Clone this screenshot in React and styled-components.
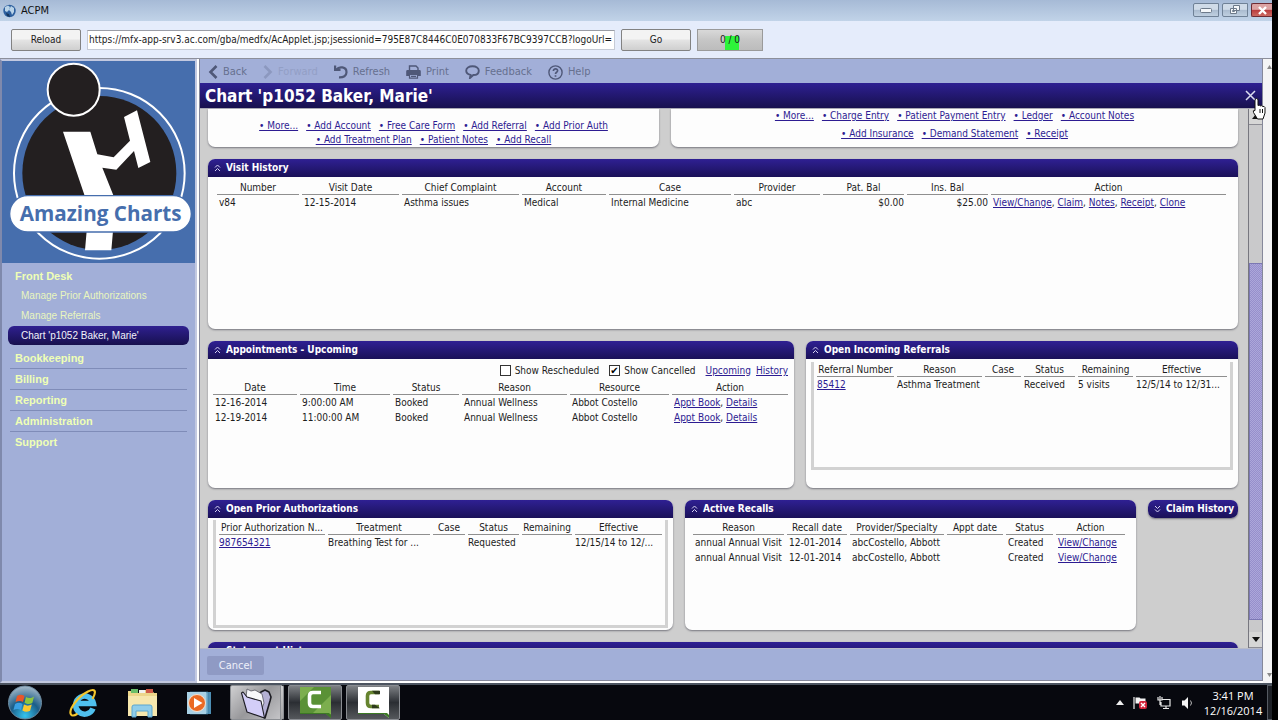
import React from "react";
import styled, { createGlobalStyle, css } from "styled-components";

const UI = `"DejaVu Sans Condensed", "Noto Sans", sans-serif`;

const GlobalStyle = createGlobalStyle`
  * { box-sizing: border-box; }
  body { margin: 0; background: #000; font: 10px/15px ${UI}; color: #1c1c1c; }
  button, input { font: inherit; color: inherit; }
  a { color: #2d1c92; }
`;

const Desktop = styled.div`
  position: relative;
  display: flex;
  flex-direction: column;
  height: 100vh;
  padding-right: 6px;
  overflow: hidden;
`;

/* ---------- window frame ---------- */
const TitleBar = styled.header`
  display: flex;
  align-items: center;
  gap: 5px;
  height: 21px;
  flex: none;
  padding-left: 3px;
  background: linear-gradient(#a6bad6, #c1d3e8);
  font-size: 11px;
  color: #111;
`;
const WindowButtons = styled.div`
  display: flex;
  gap: 3px;
  margin-left: auto;
  align-self: flex-start;
  padding-top: 3px;
`;
const WindowButton = styled.button`
  display: grid;
  place-items: center;
  width: ${(p) => (p.$close ? 21 : 26)}px;
  height: 14px;
  padding: 0;
  border: 1px solid ${(p) => (p.$close ? "#6d2b33" : "#6f8196")};
  border-right-width: ${(p) => (p.$close ? 0 : 1)}px;
  border-radius: 2px 0 0 2px;
  background: ${(p) =>
    p.$close
      ? "linear-gradient(#dca3a3 45%, #b93b3d 50%, #cc6a62)"
      : "linear-gradient(#cfdbe8 45%, #aabbcf 50%, #bfcfe0)"};
`;
const AddressBar = styled.form`
  display: flex;
  align-items: center;
  gap: 6px;
  height: 38px;
  flex: none;
  padding: 0 11px;
  background: #e5ecfb;
  border-bottom: 1px solid #8c8f9b;
`;
const PushButton = styled.button`
  width: 70px;
  height: 22px;
  padding: 0;
  border: 1px solid #828282;
  border-radius: 2px;
  background: linear-gradient(#f3f3f3 45%, #e4e4e4 50%, #cfcfcf);
`;
const UrlInput = styled.input`
  width: 528px;
  height: 20px;
  padding: 0 1px;
  border: 1px solid #c6cbd6;
  border-top-color: #9a9da6;
  background: #fff;
`;
const Meter = styled.output`
  width: 66px;
  height: 22px;
  border: 1px solid #9a9a9a;
  text-align: center;
  line-height: 20px;
  background: linear-gradient(#2df43a, #2df43a) 27px 6px / 14px 14px no-repeat,
    linear-gradient(#d9d9d9, #c6c6c6 50%, #bcbcbc);
`;

const Workspace = styled.div`
  display: flex;
  flex: 1;
  min-height: 0;
  background: #fff;
`;

/* ---------- sidebar ---------- */
const Sidebar = styled.aside`
  width: 197px;
  flex: none;
  margin-right: 2px;
  border: 2px solid #c3c9e0;
  border-left-color: #7f89ac;
  background: #a2afd8;
`;
const LogoBox = styled.div`
  height: 202px;
  background: #466ead;
  svg { display: block; width: 100%; height: 100%; }
`;
const Nav = styled.nav`
  padding: 3px 6px 0;
  font-family: "Liberation Sans", Arial, sans-serif;
`;
const NavHeading = styled.a`
  display: block;
  height: ${(p) => (p.$first ? 20 : 21)}px;
  margin: 0 2px;
  padding-left: 5px;
  border-bottom: ${(p) => (p.$line ? "1px solid #7f8cb8" : "0")};
  color: #efffb5;
  font-size: 11px;
  line-height: 20px;
  font-weight: bold;
  text-decoration: none;
`;
const NavItem = styled.a`
  display: block;
  height: 20px;
  line-height: 20px;
  padding-left: 13px;
  text-decoration: none;
  color: #e9f6bd;
  ${(p) =>
    p.$active &&
    css`
      height: 19px;
      line-height: 19px;
      margin-bottom: 3px;
      color: #f2f2fa;
      border-radius: 6px;
      background: linear-gradient(#2f2090, #17104f);
    `}
`;

/* ---------- chart window ---------- */
const ChartWindow = styled.main`
  display: flex;
  flex-direction: column;
  flex: 1;
  min-width: 0;
  border: 1px solid #85889a;
  border-top: 0;
  margin-bottom: 2px;
  background: #a2afd8;
`;
const Toolbar = styled.div`
  display: flex;
  align-items: center;
  height: 24px;
  flex: none;
  padding: 2px 0 0 8px;
  gap: 16px;
`;
const ToolButton = styled.button`
  display: flex;
  align-items: center;
  gap: 5px;
  padding: 0;
  border: 0;
  background: none;
  font-size: 11px;
  line-height: 16px;
  color: #66708f;
  opacity: ${(p) => (p.disabled ? 0.25 : 1)};
  svg { display: block; }
`;
const ChartTitle = styled.div`
  display: flex;
  align-items: center;
  justify-content: space-between;
  height: 26px;
  flex: none;
  padding: 0 6px 0 5px;
  border-bottom: 1px solid #a9a9b4;
  background: linear-gradient(#2e2092, #17104e);
  color: #fff;
  h1 { margin: 0; font: bold 17px/24px ${UI}; }
`;
const CloseButton = styled.button`
  padding: 0;
  border: 0;
  background: none;
  line-height: 0;
`;
const Viewport = styled.div`
  display: flex;
  flex: 1;
  min-height: 0;
  overflow: hidden;
`;
const Board = styled.div`
  flex: 1;
  min-width: 0;
  display: flex;
  flex-direction: column;
  gap: 12px;
  padding: 0 10px 0 8px;
  background: #cecece;
  overflow: hidden;
`;
const BoardRow = styled.div`
  display: grid;
  flex: none;
  grid-template-columns: ${(p) => p.$cols};
  align-items: start;
  gap: 12px;
`;
const PanelBox = styled.section`
  min-width: 0;
  min-height: ${(p) => p.$h}px;
  border-radius: ${(p) => (p.$cut ? "0 0 7px 7px" : "7px")};
  background: #fdfdfd;
  box-shadow: 0 1px 2px #77777f;
  overflow: hidden;
`;
const PanelHead = styled.h2`
  display: flex;
  align-items: center;
  gap: 5px;
  height: 18px;
  margin: 0;
  padding-left: 6px;
  background: linear-gradient(#2f2093, #1a1158);
  color: #fff;
  font: bold 10px/18px ${UI};
  white-space: nowrap;
  svg { flex: none; }
`;
const PanelBody = styled.div`
  padding: ${(p) => p.$pad};
`;
const Inset = styled.div`
  min-height: 108px;
  padding: 2px 0 0;
  border: 3px solid #d2d2d2;
  border-top: 0;
  table td { padding-left: 0; }
`;
const LinkLine = styled.div`
  display: flex;
  justify-content: center;
  gap: 8px;
  height: 14px;
  margin-bottom: ${(p) => p.$after || 0}px;
  line-height: 14px;
  white-space: nowrap;
`;
const Grid = styled.table`
  width: 100%;
  table-layout: fixed;
  border-collapse: separate;
  border-spacing: 3px 0;
  th, td { padding: 0; white-space: nowrap; }
  th { height: 13px; line-height: 12px; border-bottom: 1px solid #8f8f8f; font-weight: normal; }
  td { height: 15px; line-height: 15px; padding-left: 2px; }
`;
const Cell = styled.td`
  text-align: ${(p) => (p.$right ? "right" : "left")};
`;
const Filters = styled.div`
  display: flex;
  align-items: center;
  justify-content: flex-end;
  gap: 5px;
  height: 15px;
  margin-bottom: 4px;
  padding-right: 3px;
`;
const CheckLabel = styled.label`
  display: flex;
  align-items: center;
  gap: 4px;
  margin-right: 5px;
`;
const CheckBox = styled.input`
  appearance: none;
  width: 11px;
  height: 11px;
  margin: 0;
  border: 1px solid #333;
  background: #fff;
  &:checked::after {
    content: "✔";
    display: block;
    font: 10px/9px "DejaVu Sans", sans-serif;
    color: #000;
  }
`;
const ScrollTrack = styled.div`
  display: flex;
  flex-direction: column;
  width: 14px;
  flex: none;
  border-left: 1px solid #77777f;
  background: #c9c9cb;
`;
const ScrollArrow = styled.button`
  display: grid;
  place-items: center;
  height: 16px;
  flex: none;
  padding: 0;
  border: 0;
  border-bottom: 1px solid #8d8d95;
  background: #d6d6d6;
`;
const ScrollThumb = styled.div`
  flex: 357;
  border: 1px solid #7c78b4;
  border-right: 0;
  background: conic-gradient(#968fcb 25%, #aca7da 0 50%, #968fcb 0 75%, #aca7da 0) 0 0 / 2px 2px;
`;
const Space = styled.div`
  flex: ${(p) => p.$n};
`;
const FooterBar = styled.div`
  display: flex;
  align-items: center;
  height: 32px;
  flex: none;
  padding: 2px 0 0 7px;
  border-top: 1px solid #b9bcc9;
`;
const CancelButton = styled.button`
  width: 57px;
  height: 19px;
  padding: 0;
  border: 0;
  border-radius: 2px;
  background: #8f9ac4;
  color: #eef0fa;
  font-size: 11px;
  line-height: 16px;
`;
const PageScroll = styled.div`
  display: flex;
  flex-direction: column;
  justify-content: space-between;
  width: 9px;
  flex: none;
  padding: 6px 0 6px 4px;
  background: #f4f4f5;
`;

/* ---------- taskbar ---------- */
const Taskbar = styled.footer`
  display: flex;
  align-items: center;
  height: 37px;
  flex: none;
  border-top: 2px solid #4c5460;
  background: #07080e;
  color: #fff;
`;
const Launch = styled.button`
  display: grid;
  place-items: center;
  width: ${(p) => p.$w}px;
  height: 35px;
  padding: 0;
  border: 0;
  background: none;
`;
const TaskButton = styled(Launch)`
  width: 54px;
  margin-right: 4px;
  border: 1px solid #8a8d92;
  border-radius: 2px;
  background: linear-gradient(#7d8084, #2b2e33 50%, #55585c);
  ${(p) =>
    p.$active &&
    css`
      border-right: 4px double #8a8d92;
      background: linear-gradient(135deg, #d0d0d2, #98989b 50%, #c4c4c7);
    `}
`;
const Tray = styled.div`
  display: flex;
  align-items: center;
  gap: 9px;
  margin-left: auto;
`;
const Clock = styled.time`
  width: 60px;
  text-align: center;
  font: 11px/15px "Open Sans", "Noto Sans", sans-serif;
`;
const ShowDesktop = styled.button`
  width: 5px;
  height: 35px;
  padding: 0;
  border: 1px solid #555a62;
  border-right: 0;
  background: #1d2026;
  margin-left: -5px;
`;
const Pointer = styled.svg`
  position: absolute;
  right: 9px;
  top: 97px;
`;

/* ---------- icons ---------- */
const Globe = () => (
  <svg width="13" height="14" viewBox="0 0 13 14" aria-hidden="true">
    <circle cx="6.5" cy="7" r="6.2" fill="#2d5f9e" />
    <path d="M2 3 5 1.500 7 3 6 6 4 8 2 7zM8 2l3 2v4l-2 3-1-3-2-2z" fill="#b9d3e8" />
    <path d="M3 9l3 1 1 3-3-1z" fill="#16375f" />
  </svg>
);
const Arrow = ({ down, small, color = "#111" }) => (
  <svg width={small ? 5 : 8} height={small ? 4 : 5} viewBox="0 0 8 5" preserveAspectRatio="none" aria-hidden="true">
    <path d={down ? "M0 0h8L4 5z" : "M0 5h8L4 0z"} fill={color} />
  </svg>
);
const DoubleChevron = ({ down }) => (
  <svg width="7" height="8" viewBox="0 0 7 8" fill="none" stroke="#d5d2f2" aria-hidden="true">
    <path d={down ? "M1 1l2.500 2.500L6 1M1 4.500 3.500 7 6 4.500" : "M1 3.500 3.500 1 6 3.500M1 7l2.500-2.500L6 7"} />
  </svg>
);
const BackIcon = () => (
  <svg width="10" height="14" viewBox="0 0 10 14" fill="none" stroke="#4f5878" strokeWidth="2.6" aria-hidden="true">
    <path d="M8.500 1 2.500 7l6 6" />
  </svg>
);
const ForwardIcon = () => (
  <svg width="10" height="14" viewBox="0 0 10 14" fill="none" stroke="#4f5878" strokeWidth="2.6" aria-hidden="true">
    <path d="M1.500 1l6 6-6 6" />
  </svg>
);
const RefreshIcon = () => (
  <svg width="14" height="14" viewBox="0 0 14 14" aria-hidden="true">
    <path d="M2.500 4.500C5 1.200 12.500 1.400 12.500 7.200c0 3.600-3 5.400-7.500 5.200" fill="none" stroke="#4f5878" strokeWidth="2.200" />
    <path d="M0 .5h2.200V3.800H6.500V6H0z" fill="#4f5878" />
  </svg>
);
const PrintIcon = () => (
  <svg width="15" height="14" viewBox="0 0 15 14" aria-hidden="true">
    <path d="M3.500 5V1H10l2 2v2" fill="none" stroke="#4f5878" strokeWidth="1.400" />
    <path d="M1.500 5h12a1.300 1.300 0 0 1 1.300 1.300V11H12V9H3v2H.2V6.300A1.300 1.300 0 0 1 1.500 5z" fill="#4f5878" />
    <path d="M3.500 9.500h8v3.700h-8zM5 11.300h5" fill="none" stroke="#4f5878" strokeWidth="1.200" />
  </svg>
);
const FeedbackIcon = () => (
  <svg width="15" height="14" viewBox="0 0 15 14" fill="none" stroke="#4f5878" strokeWidth="1.900" aria-hidden="true">
    <path d="M7.500 1.200c3.600 0 6.300 1.900 6.300 4.500S11.500 10 8.300 10L5 13l.5-3.200C3 9.200 1.200 7.800 1.200 5.700c0-2.600 2.700-4.500 6.300-4.500z" />
  </svg>
);
const HelpIcon = () => (
  <svg width="15" height="15" viewBox="0 0 15 15" fill="none" stroke="#4f5878" strokeWidth="1.400" aria-hidden="true">
    <circle cx="7.500" cy="7.500" r="6.600" />
    <path d="M5.400 6c0-3 4.400-2.700 4.200-.2C9.500 7.300 7.500 7.300 7.500 9M7.500 10.200v1.600" strokeWidth="1.700" />
  </svg>
);

const Logo = () => (
  <svg viewBox="7 10 579 606" preserveAspectRatio="none" role="img" aria-label="Amazing Charts">
    <circle cx="299" cy="347" r="256" fill="none" stroke="#fff" strokeWidth="6" />
    <circle cx="299" cy="346" r="231" fill="#231f20" />
    <circle cx="222" cy="96" r="78" fill="#231f20" stroke="#fff" strokeWidth="6" />
    <path
      d="M190 222h82l21 68 49 9 49-50-18-71 39-20 40 155-36 18-13-51-53 56-42-6 36 90-4 100-5 58h-79l5-58-4-100z"
      fill="#fff"
    />
    <rect x="30" y="414" width="545" height="109" rx="54" fill="#fff" stroke="#466ead" strokeWidth="4" />
    <text x="303" y="491" textAnchor="middle" fontFamily="Open Sans, Noto Sans, sans-serif" fontWeight="bold" fontSize="62" fill="#466ead">
      Amazing Charts
    </text>
  </svg>
);

const StartOrb = () => (
  <svg width="36" height="35" viewBox="0 0 36 35" aria-hidden="true">
    <defs>
      <radialGradient id="orb" cx=".5" cy=".9" r=".9">
        <stop offset="0" stopColor="#35c4ee" />
        <stop offset=".5" stopColor="#1b5d88" />
        <stop offset="1" stopColor="#a9bccb" />
      </radialGradient>
    </defs>
    <circle cx="18" cy="17.500" r="16.500" fill="url(#orb)" stroke="#6d8ba0" />
    <path d="M10 11c3-2 5-1.500 7.500 0l-1.500 6c-2.500-1.500-4.500-1.500-7.500 0z" fill="#e8562a" />
    <path d="M19 12c2.500 1.500 5 1.500 8-.5l-1.700 6.500c-3 1.500-5 1.300-7.800-.3z" fill="#8ec63f" />
    <path d="M8 19c3-1.700 5-1.500 7.500 0l-1.600 6c-2.500-1.500-4.500-1.500-7.400 0z" fill="#3aa0e4" />
    <path d="M17 19.500c2.600 1.500 4.800 1.500 7.800 0l-1.700 6.200c-3 1.500-5 1.300-7.700-.2z" fill="#fbc92f" />
  </svg>
);
const ExplorerE = () => (
  <svg width="30" height="30" viewBox="0 0 30 30" fill="none" aria-hidden="true">
    <path d="M25 20.500A9 9 0 1 1 25.500 15.500H9" stroke="#4fc0ee" strokeWidth="5.500" />
    <path d="M24.500 11C29 3 27 0 20 3.500 10 8.500 0 22 3 26.500c1.200 1.800 4 .8 6.500-.8" stroke="#f5c62c" strokeWidth="2.200" />
  </svg>
);
const FolderStack = () => (
  <svg width="32" height="30" viewBox="0 0 32 30" aria-hidden="true">
    <path d="M2 3h8l2 2h7V2h7l2 3h3v23H2z" fill="#ecd68a" />
    <path d="M5 1h7v4H5z" fill="#6bbf6a" />
    <path d="M13 2h6v3h-6z" fill="#f2f2ee" />
    <path d="M20 1h7v4h-7z" fill="#cf5b48" />
    <path d="M2 8h29v20H2z" fill="#f6e7ad" />
    <path d="M6 29V19q0-2 2-2h16q2 0 2 2v10h-4v-6H10v6z" fill="#8fcdea" stroke="#5ba6cf" />
  </svg>
);
const MediaPlayer = () => (
  <svg width="26" height="26" viewBox="0 0 26 26" aria-hidden="true">
    <path d="M6 2h19v22H6z" fill="#4d8fb5" />
    <path d="M4 2h18v22H4z" fill="#7db4d0" stroke="#3d7ca0" strokeWidth=".7" />
    <path d="M1 2h19v22H1z" fill="#a8d0e4" />
    <circle cx="11" cy="13" r="8.500" fill="#ea6a24" stroke="#f4e2d2" />
    <path d="M8 8l8.500 5L8 18z" fill="#fff" />
  </svg>
);
const OpenFolder = () => (
  <svg width="32" height="32" viewBox="0 0 32 32" stroke="#1c1c22" strokeLinejoin="round" aria-hidden="true">
    <path d="M18 8l3-3 4-2 4 2 2 5-1 4-5 17-4-2z" fill="#b4b0d4" strokeWidth="1.600" />
    <path d="M6 10l1-8 4 2 4-1 7 4 2 9-3 8z" fill="#f8f8fb" stroke="#55555f" strokeWidth=".8" />
    <path d="M1.500 6 3 5l4 5 14 4 3.500 17L7 25z" fill="#d3cef8" strokeWidth="1.100" />
  </svg>
);
const Camtasia = ({ light }) => (
  <svg width="31" height="31" viewBox="0 0 31 31" aria-hidden="true">
    <path d="M0 0h31v31l-5-4H0z" fill={light ? "#fff" : "#5a9136"} />
    {!light && <path d="M0 0h14L0 14zM31 8v19H12z" fill="#8abb58" opacity=".7" />}
    <path d="M0 27h26l5 4v-3l-2-2H0z" fill="#3c7a24" />
    <path
      d="M21 5.500h-8q-3.500 0-3.500 3.500v7q0 3.500 3.500 3.500h8"
      fill="none"
      stroke={light ? "#66842f" : "#fff"}
      strokeWidth="3.600"
    />
    {light && <path d="M14 3.700h8v3.600h-5zM14 17.700h3l5 3.600h-8z" fill="#2d3a1b" />}
  </svg>
);
const FlagIcon = () => (
  <svg width="15" height="14" viewBox="0 0 15 14" aria-hidden="true">
    <path d="M1 1v12" stroke="#ddd" strokeWidth="1.300" />
    <path d="M2.500 1.500h4l1 1h5v5h-10z" fill="#f4f4f4" />
    <rect x="6" y="5" width="8" height="8" rx="2" fill="#d1243b" />
    <path d="M8 7l4 4M12 7l-4 4" stroke="#fff" strokeWidth="1.400" />
  </svg>
);
const NetworkIcon = () => (
  <svg width="15" height="14" viewBox="0 0 15 14" fill="none" stroke="#e8e8e8" strokeWidth="1.200" aria-hidden="true">
    <path d="M5.500 3.500H13v6.500H4V6M1 1v3h4V1M3 0v9M6 12.500h6M9 10v2.500" />
  </svg>
);
const SpeakerIcon = () => (
  <svg width="13" height="14" viewBox="0 0 13 14" aria-hidden="true">
    <path d="M1 4.500h2.500L7 1v12L3.500 9.500H1z" fill="#f4f4f4" />
    <path d="M9.500 4.500q2 2.500 0 5" fill="none" stroke="#bbb" />
  </svg>
);

/* ---------- parts ---------- */
const Links = ({ names, bullets }) =>
  names.map((name, i) => (
    <React.Fragment key={name}>
      {i > 0 && !bullets && ", "}
      <a href="#chart">{bullets ? `• ${name}` : name}</a>
    </React.Fragment>
  ));

const Panel = ({ title, collapsed, height, pad, children }) => (
  <PanelBox $h={height}>
    <PanelHead>
      <DoubleChevron down={collapsed} />
      {title}
    </PanelHead>
    {children && <PanelBody $pad={pad}>{children}</PanelBody>}
  </PanelBox>
);

const DataTable = ({ columns, rows }) => (
  <Grid>
    <colgroup>
      {columns.map(([name, width]) => (
        <col key={name} width={width} />
      ))}
    </colgroup>
    <thead>
      <tr>
        {columns.map(([name]) => (
          <th key={name} scope="col">{name}</th>
        ))}
      </tr>
    </thead>
    <tbody>
      {rows.map((row, r) => (
        <tr key={r}>
          {row.map((value, c) => (
            <Cell key={c} $right={typeof value === "string" && value[0] === "$"}>
              {Array.isArray(value) ? <Links names={value} /> : value}
            </Cell>
          ))}
        </tr>
      ))}
    </tbody>
  </Grid>
);

const visits = {
  columns: [["Number", 82], ["Visit Date", 97], ["Chief Complaint", 117], ["Account", 84], ["Case", 122], ["Provider", 86], ["Pat. Bal", 81], ["Ins. Bal", 81], ["Action"]],
  rows: [["v84", "12-15-2014", "Asthma issues", "Medical", "Internal Medicine", "abc", "$0.00", "$25.00", ["View/Change", "Claim", "Notes", "Receipt", "Clone"]]],
};
const appointments = {
  columns: [["Date", 84], ["Time", 90], ["Status", 66], ["Reason", 105], ["Resource", 99], ["Action"]],
  rows: [
    ["12-16-2014", "9:00:00 AM", "Booked", "Annual Wellness", "Abbot Costello", ["Appt Book", "Details"]],
    ["12-19-2014", "11:00:00 AM", "Booked", "Annual Wellness", "Abbot Costello", ["Appt Book", "Details"]],
  ],
};
const referrals = {
  columns: [["Referral Number", 77], ["Reason", 85], ["Case", 36], ["Status", 51], ["Remaining", 55], ["Effective"]],
  rows: [[["85412"], "Asthma Treatment", "", "Received", "5 visits", "12/5/14 to 12/31..."]],
};
const authorizations = {
  columns: [["Prior Authorization N...", 106], ["Treatment", 102], ["Case", 32], ["Status", 51], ["Remaining", 50], ["Effective"]],
  rows: [[["987654321"], "Breathing Test for ...", "", "Requested", "", "12/15/14 to 12/..."]],
};
const recalls = {
  columns: [["Reason", 91], ["Recall date", 60], ["Provider/Specialty", 94], ["Appt date", 56], ["Status", 47], ["Action"]],
  rows: [
    ["annual Annual Visit", "12-01-2014", "abcCostello, Abbott", "", "Created", ["View/Change"]],
    ["annual Annual Visit", "12-01-2014", "abcCostello, Abbott", "", "Created", ["View/Change"]],
  ],
};

export default function App() {
  return (
    <Desktop>
      <GlobalStyle />
      <TitleBar>
        <Globe />
        ACPM
        <WindowButtons>
          <WindowButton aria-label="Minimize">
            <svg width="12" height="5"><rect x=".5" y=".5" width="11" height="4" rx="1" fill="#f4f7fa" stroke="#6d7a8a" /></svg>
          </WindowButton>
          <WindowButton aria-label="Restore">
            <svg width="12" height="10" fill="#f4f7fa" stroke="#6d7a8a"><path d="M4.500.5h6v5h-6zM1.500 3.500h6v5h-6zM3.500 5.500h2v1h-2z" /></svg>
          </WindowButton>
          <WindowButton $close aria-label="Close window">
            <svg width="11" height="9"><path d="M2 1l7 7M9 1 2 8" stroke="#fff" strokeWidth="2.400" /></svg>
          </WindowButton>
        </WindowButtons>
      </TitleBar>

      <AddressBar onSubmit={(e) => e.preventDefault()}>
        <PushButton type="button">Reload</PushButton>
        <UrlInput
          aria-label="Address"
          defaultValue="https://mfx-app-srv3.ac.com/gba/medfx/AcApplet.jsp;jsessionid=795E87C8446C0E070833F67BC9397CCB?logoUrl="
        />
        <PushButton type="submit">Go</PushButton>
        <Meter>0 / 0</Meter>
      </AddressBar>

      <Workspace>
        <Sidebar>
          <LogoBox><Logo /></LogoBox>
          <Nav>
            <NavHeading href="#front" $first>Front Desk</NavHeading>
            <NavItem href="#auth">Manage Prior Authorizations</NavItem>
            <NavItem href="#ref">Manage Referrals</NavItem>
            <NavItem href="#chart" $active>Chart 'p1052 Baker, Marie'</NavItem>
            <NavHeading href="#book" $line>Bookkeeping</NavHeading>
            <NavHeading href="#bill" $line>Billing</NavHeading>
            <NavHeading href="#report" $line>Reporting</NavHeading>
            <NavHeading href="#admin" $line>Administration</NavHeading>
            <NavHeading href="#support">Support</NavHeading>
          </Nav>
        </Sidebar>

        <ChartWindow>
          <Toolbar>
            <ToolButton><BackIcon />Back</ToolButton>
            <ToolButton disabled><ForwardIcon />Forward</ToolButton>
            <ToolButton><RefreshIcon />Refresh</ToolButton>
            <ToolButton><PrintIcon />Print</ToolButton>
            <ToolButton><FeedbackIcon />Feedback</ToolButton>
            <ToolButton><HelpIcon />Help</ToolButton>
          </Toolbar>
          <ChartTitle>
            <h1>Chart 'p1052 Baker, Marie'</h1>
            <CloseButton aria-label="Close chart">
              <svg width="11" height="11"><path d="M1 1l9 9M10 1l-9 9" stroke="#dcdcf0" strokeWidth="1.500" /></svg>
            </CloseButton>
          </ChartTitle>

          <Viewport>
            <Board>
              <BoardRow $cols="451fr 567fr">
                <PanelBox $cut $h={38}>
                  <PanelBody $pad="10px 0 0">
                    <LinkLine><Links bullets names={["More...", "Add Account", "Free Care Form", "Add Referral", "Add Prior Auth"]} /></LinkLine>
                    <LinkLine><Links bullets names={["Add Treatment Plan", "Patient Notes", "Add Recall"]} /></LinkLine>
                  </PanelBody>
                </PanelBox>
                <PanelBox $cut $h={38}>
                  <LinkLine $after={4}><Links bullets names={["More...", "Charge Entry", "Patient Payment Entry", "Ledger", "Account Notes"]} /></LinkLine>
                  <LinkLine><Links bullets names={["Add Insurance", "Demand Statement", "Receipt"]} /></LinkLine>
                </PanelBox>
              </BoardRow>

              <BoardRow $cols="minmax(0, 1fr)">
                <Panel title="Visit History" height={170} pad="5px 9px 0 6px"><DataTable {...visits} /></Panel>
              </BoardRow>

              <BoardRow $cols="586fr 432fr">
                <Panel title="Appointments - Upcoming" height={147} pad="4px 3px 0 2px">
                  <Filters>
                    <CheckLabel><CheckBox type="checkbox" />Show Rescheduled</CheckLabel>
                    <CheckLabel><CheckBox type="checkbox" defaultChecked />Show Cancelled</CheckLabel>
                    <a href="#upcoming">Upcoming</a>
                    <a href="#history">History</a>
                  </Filters>
                  <DataTable {...appointments} />
                </Panel>
                <Panel title="Open Incoming Referrals" height={147} pad="3px 5px 0 5px">
                  <Inset><DataTable {...referrals} /></Inset>
                </Panel>
              </BoardRow>

              <BoardRow $cols="465fr 451fr 90fr">
                <Panel title="Open Prior Authorizations" height={130} pad="2px 5px 0 5px">
                  <Inset><DataTable {...authorizations} /></Inset>
                </Panel>
                <Panel title="Active Recalls" height={130} pad="4px 8px 0 5px"><DataTable {...recalls} /></Panel>
                <Panel title="Claim History" collapsed height={18} />
              </BoardRow>

              <BoardRow $cols="minmax(0, 1fr)">
                <Panel title="Statement History" collapsed height={18} />
              </BoardRow>
            </Board>
            <ScrollTrack>
              <ScrollArrow aria-label="Scroll up"><Arrow /></ScrollArrow>
              <Space $n={139} />
              <ScrollThumb />
              <Space $n={12} />
              <ScrollArrow aria-label="Scroll down"><Arrow down /></ScrollArrow>
            </ScrollTrack>
          </Viewport>

          <FooterBar><CancelButton>Cancel</CancelButton></FooterBar>
        </ChartWindow>

        <PageScroll><Arrow small color="#888" /><Arrow small down color="#888" /></PageScroll>
      </Workspace>

      <Taskbar>
        <Launch $w={50} aria-label="Start"><StartOrb /></Launch>
        <Launch $w={66} aria-label="Internet Explorer"><ExplorerE /></Launch>
        <Launch $w={52} aria-label="Windows Explorer"><FolderStack /></Launch>
        <Launch $w={62} aria-label="Media Player"><MediaPlayer /></Launch>
        <TaskButton $active aria-label="ACPM"><OpenFolder /></TaskButton>
        <TaskButton aria-label="Camtasia Studio"><Camtasia /></TaskButton>
        <TaskButton aria-label="Camtasia Recorder"><Camtasia light /></TaskButton>
        <Tray>
          <Arrow color="#eee" />
          <FlagIcon />
          <NetworkIcon />
          <SpeakerIcon />
          <Clock>3:41 PM<br />12/16/2014</Clock>
          <ShowDesktop aria-label="Show desktop" />
        </Tray>
      </Taskbar>

      <Pointer width="18" height="23" viewBox="0 0 18 23" aria-hidden="true">
        <path
          d="M4 2.500q1.500-2 3 0v6q1.200-1 2.400.4 1.200-.8 2.400.6 1.500-.6 2.200 1V16l-2 6H6.500l-4-6.500q-1-2.500 1.500-2z"
          fill="#fff"
          stroke="#111"
        />
        <path d="M9 12v4M11.500 12v4" stroke="#111" />
      </Pointer>
    </Desktop>
  );
}
